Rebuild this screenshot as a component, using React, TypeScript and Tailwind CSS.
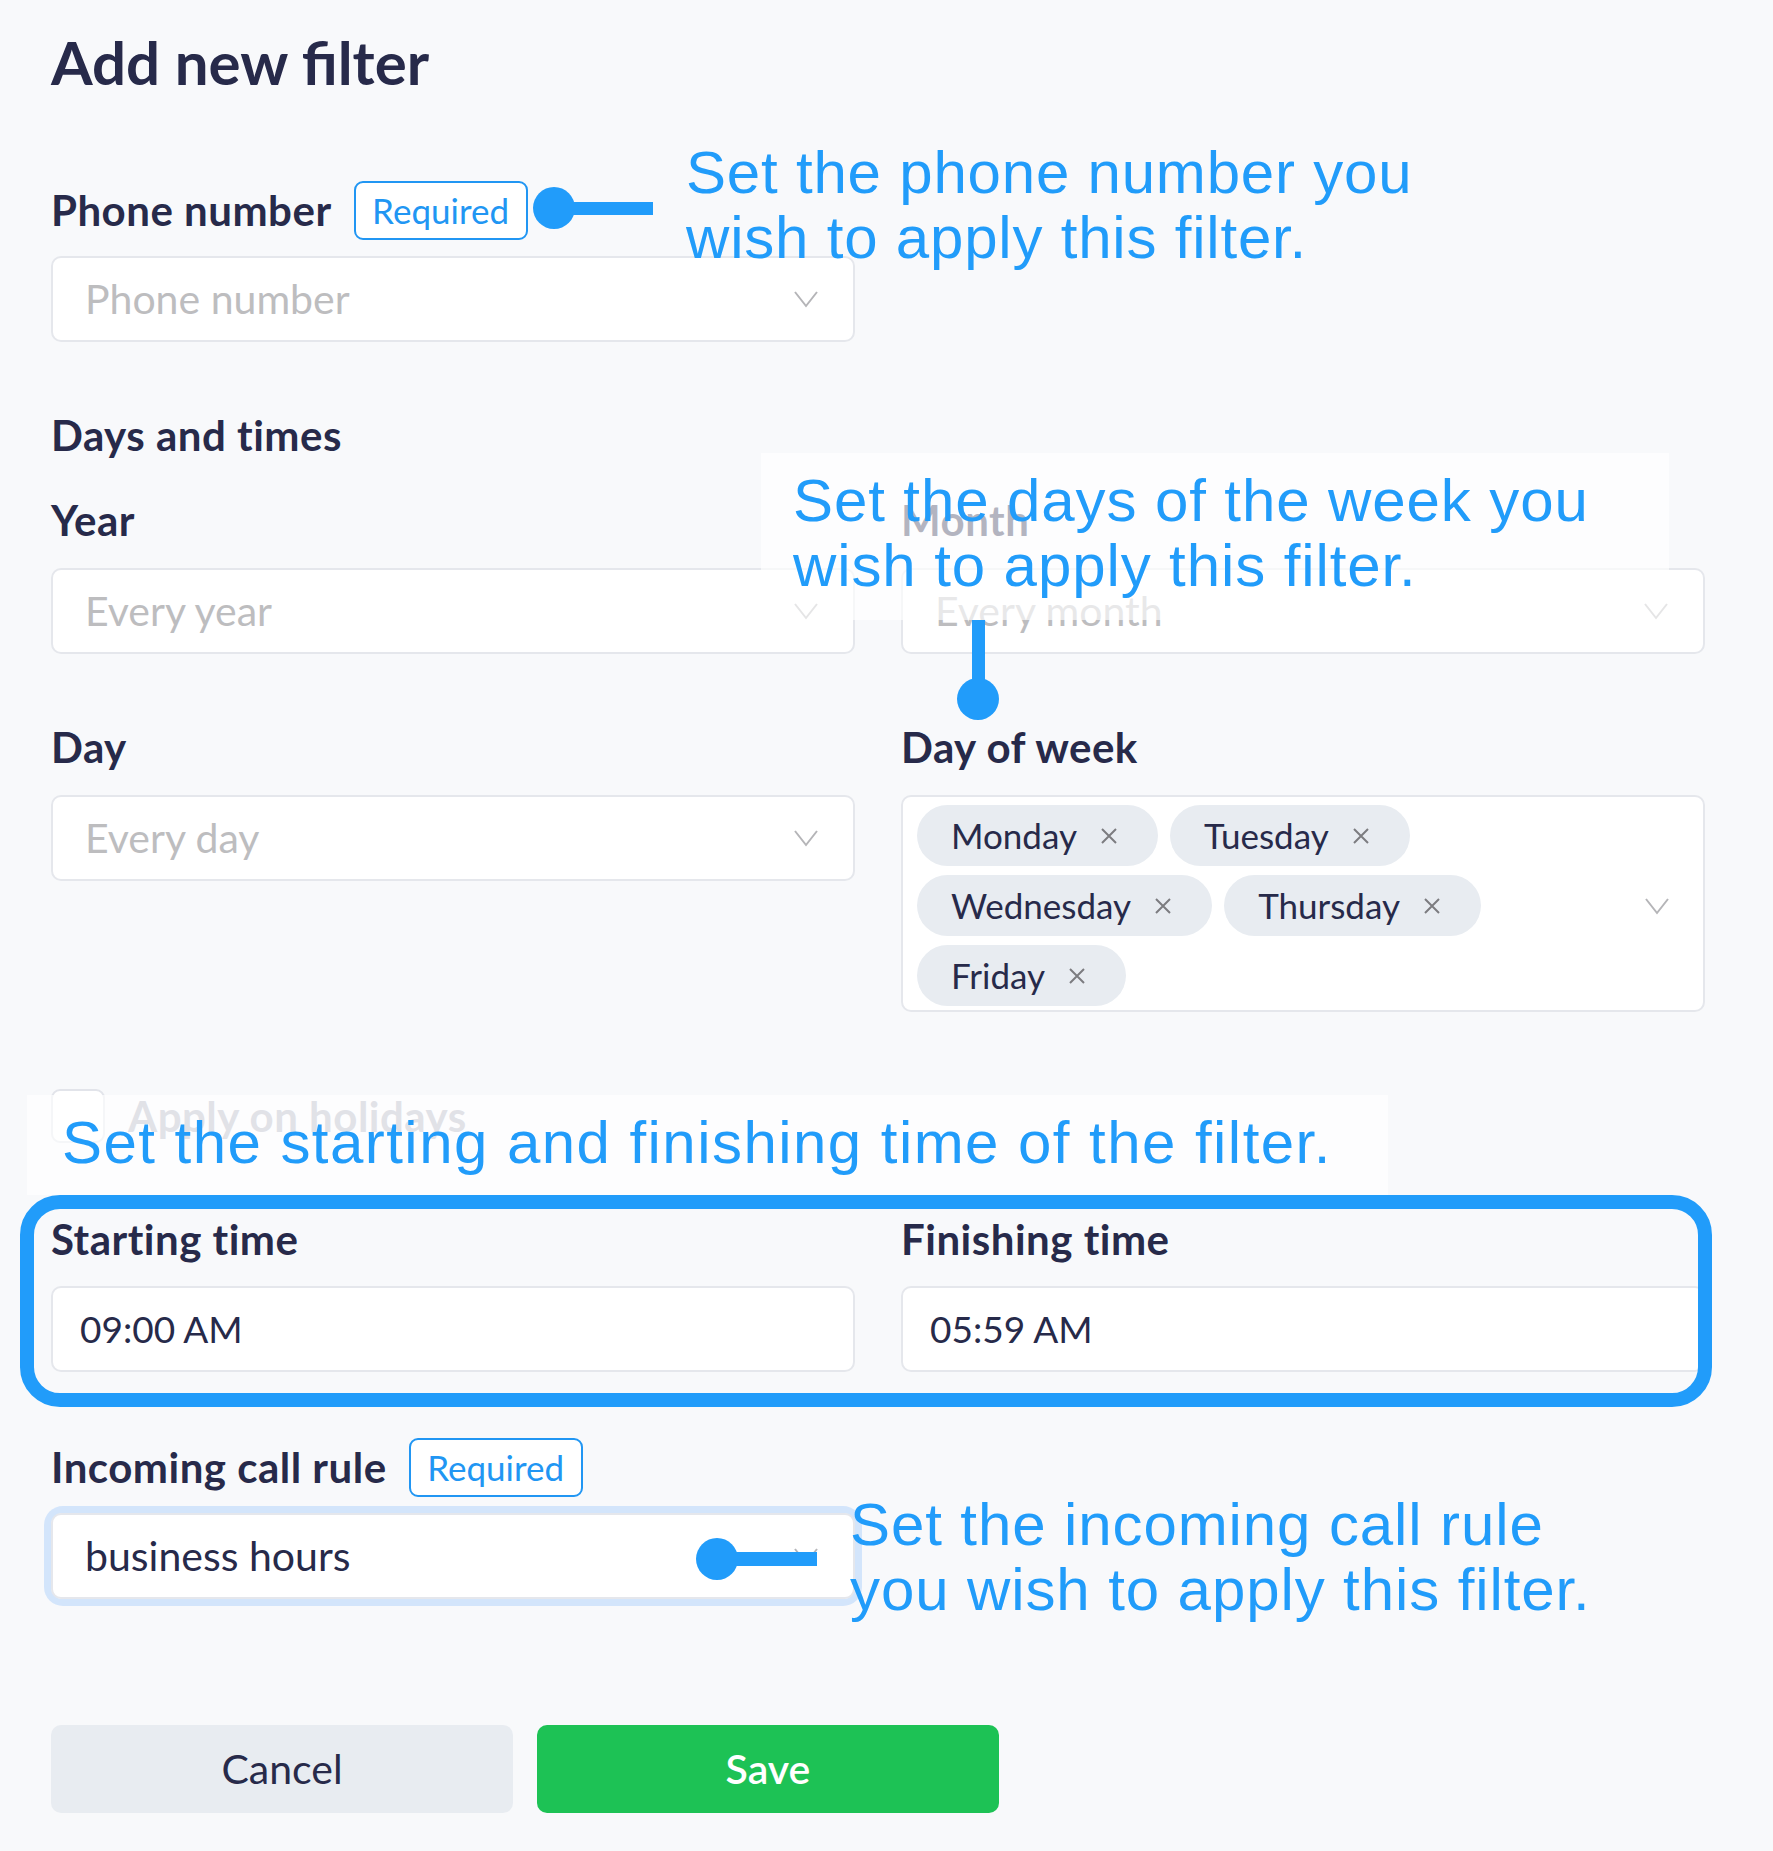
import React from "react";

const UI_FONT = { fontFamily: 'Lato, "Noto Sans", sans-serif' };
const ANN_FONT = { fontFamily: '"Liberation Sans", Arial, sans-serif' };

function Chevron() {
  return (
    <svg width="26" height="20" viewBox="0 0 26 20" fill="none" className="shrink-0">
      <polyline points="2,3 13,17 24,3" stroke="#b5b5b8" strokeWidth="2" strokeLinejoin="miter" />
    </svg>
  );
}

function XIcon() {
  return (
    <svg width="18" height="18" viewBox="0 0 18 18" fill="none" className="shrink-0">
      <path d="M2 2 L16 16 M16 2 L2 16" stroke="#7c7c80" strokeWidth="2" />
    </svg>
  );
}

function Label({ children }: { children: React.ReactNode }) {
  return (
    <div className="text-[42px] font-bold leading-[48px] tracking-[0.5px] text-[#272a4a]">{children}</div>
  );
}

function Select({ placeholder, value }: { placeholder?: string; value?: string }) {
  return (
    <div className="flex h-[86px] items-center justify-between rounded-[10px] border-2 border-[#e5e7ec] bg-white pl-[32px] pr-[34px]">
      <span className={`text-[41px] ${value ? "text-[#272a4a]" : "text-[#bdbdbf]"}`}>{value ?? placeholder}</span>
      <Chevron />
    </div>
  );
}

function TimeInput({ value }: { value: string }) {
  return (
    <div className="flex h-[86px] items-center rounded-[10px] border-2 border-[#e5e7ec] bg-white pl-[27px]">
      <span className="text-[37px] text-[#272a4a]">{value}</span>
    </div>
  );
}

function Badge() {
  return (
    <span className="flex h-[59px] w-[174px] items-center justify-center rounded-[9px] border-2 border-[#2196f3] bg-white text-[35px] text-[#2196f3]">
      Required
    </span>
  );
}

function Chip({ label }: { label: string }) {
  return (
    <span className="flex h-[61px] items-center gap-[23px] rounded-full bg-[#e8ecf1] pl-[34px] pr-[40px]">
      <span className="text-[35px] text-[#272a4a]">{label}</span>
      <XIcon />
    </span>
  );
}

function Dot() {
  return <span className="block h-[42px] w-[42px] shrink-0 rounded-full bg-[#219cfa]" />;
}

export default function App() {
  return (
    <div className="relative h-[1851px] w-[1773px] overflow-hidden bg-[#f8f9fb]" style={UI_FONT}>
      <div className="w-[1705px] pl-[51px] pt-[32px]">
        <h1 className="text-[60px] font-bold leading-[60px] text-[#272a4a]">Add new filter</h1>

        <div className="mt-[89px] flex h-[59px] items-center gap-[22px]">
          <span className="text-[42px] font-bold leading-[59px] tracking-[0.5px] text-[#272a4a]">Phone number</span>
          <Badge />
        </div>
        <div className="mt-[16px] w-[804px]">
          <Select placeholder="Phone number" />
        </div>

        <div className="mt-[69px]">
          <Label>Days and times</Label>
        </div>

        <div className="mt-[37px] grid grid-cols-[804px_804px] gap-x-[46px]">
          <div>
            <Label>Year</Label>
            <div className="mt-[24px]">
              <Select placeholder="Every year" />
            </div>
          </div>
          <div>
            <Label>Month</Label>
            <div className="mt-[24px]">
              <Select placeholder="Every month" />
            </div>
          </div>
        </div>

        <div className="mt-[69px] grid grid-cols-[804px_804px] items-start gap-x-[46px]">
          <div>
            <Label>Day</Label>
            <div className="mt-[24px]">
              <Select placeholder="Every day" />
            </div>
          </div>
          <div>
            <Label>Day of week</Label>
            <div className="mt-[24px] flex items-center justify-between rounded-[10px] border-2 border-[#e5e7ec] bg-white pb-[4px] pl-[14px] pr-[33px] pt-[8px]">
              <div className="flex max-w-[700px] flex-1 flex-wrap gap-x-[12px] gap-y-[9px]">
                <Chip label="Monday" />
                <Chip label="Tuesday" />
                <Chip label="Wednesday" />
                <Chip label="Thursday" />
                <Chip label="Friday" />
              </div>
              <Chevron />
            </div>
          </div>
        </div>

        <div className="mt-[77px] flex h-[54px] items-center gap-[23px]">
          <span className="block h-[54px] w-[54px] rounded-[9px] border-2 border-[#e2e4ea] bg-white" />
          <span className="text-[42px] font-bold leading-[54px] tracking-[0.5px] text-[#a9abbb]">Apply on holidays</span>
        </div>

        <div className="mt-[72px] grid grid-cols-[804px_804px] gap-x-[46px]">
          <div>
            <Label>Starting time</Label>
            <div className="mt-[23px]">
              <TimeInput value="09:00 AM" />
            </div>
          </div>
          <div>
            <Label>Finishing time</Label>
            <div className="mt-[23px]">
              <TimeInput value="05:59 AM" />
            </div>
          </div>
        </div>

        <div className="mt-[66px] flex h-[59px] items-center gap-[22px]">
          <span className="text-[42px] font-bold leading-[59px] tracking-[0.5px] text-[#272a4a]">Incoming call rule</span>
          <Badge />
        </div>
        <div className="mt-[16px] w-[804px] rounded-[12px] shadow-[0_0_0_7px_#d3e5fb]">
          <Select value="business hours" />
        </div>

        <div className="mt-[126px] flex gap-[24px]">
          <button className="h-[88px] w-[462px] rounded-[10px] bg-[#e8ecf1] text-[41px] text-[#272a4a]">Cancel</button>
          <button className="h-[88px] w-[462px] rounded-[10px] bg-[#1dc255] text-[41px] font-semibold text-white">Save</button>
        </div>
      </div>

      {/* Annotation overlays */}
      <div
        className="absolute left-[686px] top-[140px] whitespace-nowrap text-[60px] leading-[65px] tracking-[0.8px] text-[#219cfa]"
        style={ANN_FONT}
      >
        <div>Set the phone number you</div>
        <div>wish to apply this filter.</div>
      </div>
      <div className="absolute left-[533px] top-[187px] flex items-center">
        <Dot />
        <span className="-ml-[2px] block h-[13px] w-[80px] bg-[#219cfa]" />
      </div>

      <div className="absolute left-[761px] top-[453px] h-[167px] w-[908px] bg-white/65 pl-[32px] pt-[15px]">
        <div className="whitespace-nowrap text-[60px] leading-[65px] tracking-[0.9px] text-[#219cfa]" style={ANN_FONT}>
          <div>Set the days of the week you</div>
          <div>wish to apply this filter.</div>
        </div>
      </div>
      <div className="absolute left-[957px] top-[620px] flex flex-col items-center">
        <span className="block h-[62px] w-[13px] bg-[#219cfa]" />
        <span className="-mt-[4px] block h-[42px] w-[42px] rounded-full bg-[#219cfa]" />
      </div>

      <div className="absolute left-[27px] top-[1095px] h-[100px] w-[1361px] bg-white/65 pl-[35px] pt-[15px]">
        <div className="whitespace-nowrap text-[60px] leading-[65px] tracking-[1.45px] text-[#219cfa]" style={ANN_FONT}>
          Set the starting and finishing time of the filter.
        </div>
      </div>

      <div className="absolute left-[20px] top-[1195px] h-[212px] w-[1692px] rounded-[40px] border-[14px] border-[#219cfa]" />

      <div
        className="absolute left-[850px] top-[1492px] whitespace-nowrap text-[60px] leading-[65px] tracking-[0.9px] text-[#219cfa]"
        style={ANN_FONT}
      >
        <div>Set the incoming call rule</div>
        <div>you wish to apply this filter.</div>
      </div>
      <div className="absolute left-[696px] top-[1538px] flex items-center">
        <Dot />
        <span className="-ml-[2px] block h-[14px] w-[81px] bg-[#219cfa]" />
      </div>
    </div>
  );
}
